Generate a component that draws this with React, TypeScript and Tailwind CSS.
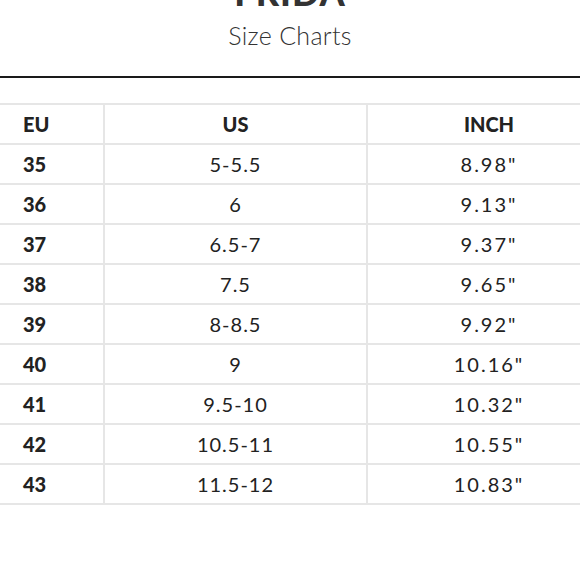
import React from "react";

const rows: [string, string, string][] = [
  ["35", "5-5.5", '8.98"'],
  ["36", "6", '9.13"'],
  ["37", "6.5-7", '9.37"'],
  ["38", "7.5", '9.65"'],
  ["39", "8-8.5", '9.92"'],
  ["40", "9", '10.16"'],
  ["41", "9.5-10", '10.32"'],
  ["42", "10.5-11", '10.55"'],
  ["43", "11.5-12", '10.83"'],
];

export default function App() {
  return (
    <div
      className="w-[580px] h-[580px] overflow-hidden bg-white text-[#222]"
      style={{ fontFamily: "Lato, 'Open Sans', sans-serif" }}
    >
      <div className="h-[76px] flex flex-col items-center">
        <div className="mt-[-24px] h-[32px] leading-[32px] text-[36px] font-black tracking-[1px] text-[#333]">
          FRIDA
        </div>
        <div className="mt-[12px] leading-[30px] text-[25px] font-light text-[#333] tracking-[0.3px]">
          Size Charts
        </div>
      </div>
      <div className="h-[2px] bg-[#1a1a1a]" />
      <div className="h-[25px]" />
      <div className="w-[610px] grid grid-cols-[103px_261px_242px] gap-[2px] bg-[#e6e6e6] py-[2px]">
        <div className="bg-white h-[38px] flex items-center pl-[23px] text-[20px] font-black">EU</div>
        <div className="bg-white h-[38px] flex items-center justify-center text-[20px] font-black">US</div>
        <div className="bg-white h-[38px] flex items-center justify-center text-[20px] font-black">INCH</div>
        {rows.map(([eu, us, inch]) => (
          <React.Fragment key={eu}>
            <div className="bg-white h-[38px] flex items-center pl-[23px] text-[20px] font-black">{eu}</div>
            <div className="bg-white h-[38px] flex items-center justify-center text-[20px] font-normal tracking-[1px]">{us}</div>
            <div className="bg-white h-[38px] flex items-center justify-center text-[20px] font-normal tracking-[2px]">{inch}</div>
          </React.Fragment>
        ))}
      </div>
    </div>
  );
}
